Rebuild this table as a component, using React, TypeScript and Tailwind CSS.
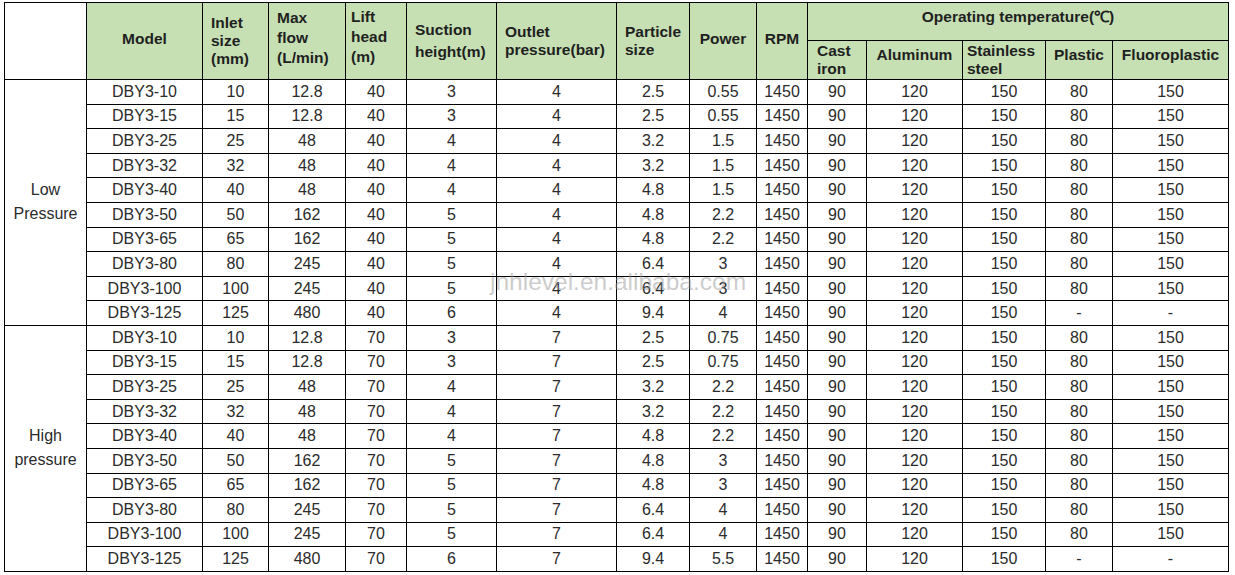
const low = [
  ["DBY3-10", "10", "12.8", "40", "3", "4", "2.5", "0.55"],
  ["DBY3-15", "15", "12.8", "40", "3", "4", "2.5", "0.55"],
  ["DBY3-25", "25", "48", "40", "4", "4", "3.2", "1.5"],
  ["DBY3-32", "32", "48", "40", "4", "4", "3.2", "1.5"],
  ["DBY3-40", "40", "48", "40", "4", "4", "4.8", "1.5"],
  ["DBY3-50", "50", "162", "40", "5", "4", "4.8", "2.2"],
  ["DBY3-65", "65", "162", "40", "5", "4", "4.8", "2.2"],
  ["DBY3-80", "80", "245", "40", "5", "4", "6.4", "3"],
  ["DBY3-100", "100", "245", "40", "5", "4", "6.4", "3"],
  ["DBY3-125", "125", "480", "40", "6", "4", "9.4", "4"],
];

const high = [
  ["DBY3-10", "10", "12.8", "70", "3", "7", "2.5", "0.75"],
  ["DBY3-15", "15", "12.8", "70", "3", "7", "2.5", "0.75"],
  ["DBY3-25", "25", "48", "70", "4", "7", "3.2", "2.2"],
  ["DBY3-32", "32", "48", "70", "4", "7", "3.2", "2.2"],
  ["DBY3-40", "40", "48", "70", "4", "7", "4.8", "2.2"],
  ["DBY3-50", "50", "162", "70", "5", "7", "4.8", "3"],
  ["DBY3-65", "65", "162", "70", "5", "7", "4.8", "3"],
  ["DBY3-80", "80", "245", "70", "5", "7", "6.4", "4"],
  ["DBY3-100", "100", "245", "70", "5", "7", "6.4", "4"],
  ["DBY3-125", "125", "480", "70", "6", "7", "9.4", "5.5"],
];

const widths = [82, 116, 66, 77, 61, 90, 120, 73, 67, 51, 59, 96, 83, 67, 116];

const th = "border border-black bg-[#c6e0b4] font-bold text-[15.5px] leading-[18px] text-[#1f1f1f] align-middle";
const td = "border border-black h-[24.6px] p-0 leading-[20px] text-center align-middle";

function Group({ label, rows }: { label: string[]; rows: string[][] }) {
  return (
    <>
      {rows.map((r, i) => {
        const last = i === rows.length - 1;
        return (
          <tr key={i}>
            {i === 0 && (
              <td rowSpan={rows.length} className="border border-black p-0 text-center align-middle leading-[24px]">
                {label[0]}
                <br />
                {label[1]}
              </td>
            )}
            {r.map((v, j) => (
              <td key={j} className={td}>
                {v}
              </td>
            ))}
            <td className={td}>1450</td>
            <td className={td}>90</td>
            <td className={td}>120</td>
            <td className={td}>150</td>
            <td className={td}>{last ? "-" : "80"}</td>
            <td className={td}>{last ? "-" : "150"}</td>
          </tr>
        );
      })}
    </>
  );
}

export default function App() {
  return (
    <div className="relative w-[1235px] h-[575px] bg-white pl-[4px] pt-[2px] font-['Liberation_Sans',Arial,sans-serif] text-[16px] text-[#2b2b2b]">
      <table className="table-fixed border-collapse w-[1225px]">
        <colgroup>
          {widths.map((w, i) => (
            <col key={i} style={{ width: w }} />
          ))}
        </colgroup>
        <thead>
          <tr className="h-[38px]">
            <th rowSpan={2} className="border border-black bg-white" />
            <th rowSpan={2} className={`${th} text-center pb-[4px]`}>Model</th>
            <th rowSpan={2} className={`${th} text-left pl-2`}>
              Inlet
              <br />
              size
              <br />
              (mm)
            </th>
            <th rowSpan={2} className={`${th} text-left pl-2 leading-[20px] pb-[6px]`}>
              Max
              <br />
              flow
              <br />
              (L/min)
            </th>
            <th rowSpan={2} className={`${th} text-left pl-[5px] leading-[20px] pb-[8px]`}>
              Lift
              <br />
              head
              <br />
              (m)
            </th>
            <th rowSpan={2} className={`${th} text-left pl-2 leading-[22px]`}>
              Suction
              <br />
              height(m)
            </th>
            <th rowSpan={2} className={`${th} text-left pl-2`}>
              Outlet
              <br />
              pressure(bar)
            </th>
            <th rowSpan={2} className={`${th} text-left pl-2`}>
              Particle
              <br />
              size
            </th>
            <th rowSpan={2} className={`${th} text-center pb-[4px]`}>Power</th>
            <th rowSpan={2} className={`${th} text-center pb-[4px]`}>RPM</th>
            <th colSpan={5} className={`${th} text-center align-top pt-[5px]`}>
              Operating temperature(℃)
            </th>
          </tr>
          <tr className="h-[39px]">
            <th className={`${th} text-left pl-[9px]`}>
              Cast
              <br />
              iron
            </th>
            <th className={`${th} text-center pb-[10px]`}>Aluminum</th>
            <th className={`${th} text-left pl-[4px]`}>
              Stainless
              <br />
              steel
            </th>
            <th className={`${th} text-center pb-[10px]`}>Plastic</th>
            <th className={`${th} text-center pb-[10px]`}>Fluoroplastic</th>
          </tr>
        </thead>
        <tbody>
          <Group label={["Low", "Pressure"]} rows={low} />
          <Group label={["High", "pressure"]} rows={high} />
        </tbody>
      </table>
      <div className="absolute left-[490px] top-[268px] text-[24.5px] leading-[28px] text-[#9a9a9a]/50 pointer-events-none select-none">
        jnhlevel.en.alibaba.com
      </div>
    </div>
  );
}
